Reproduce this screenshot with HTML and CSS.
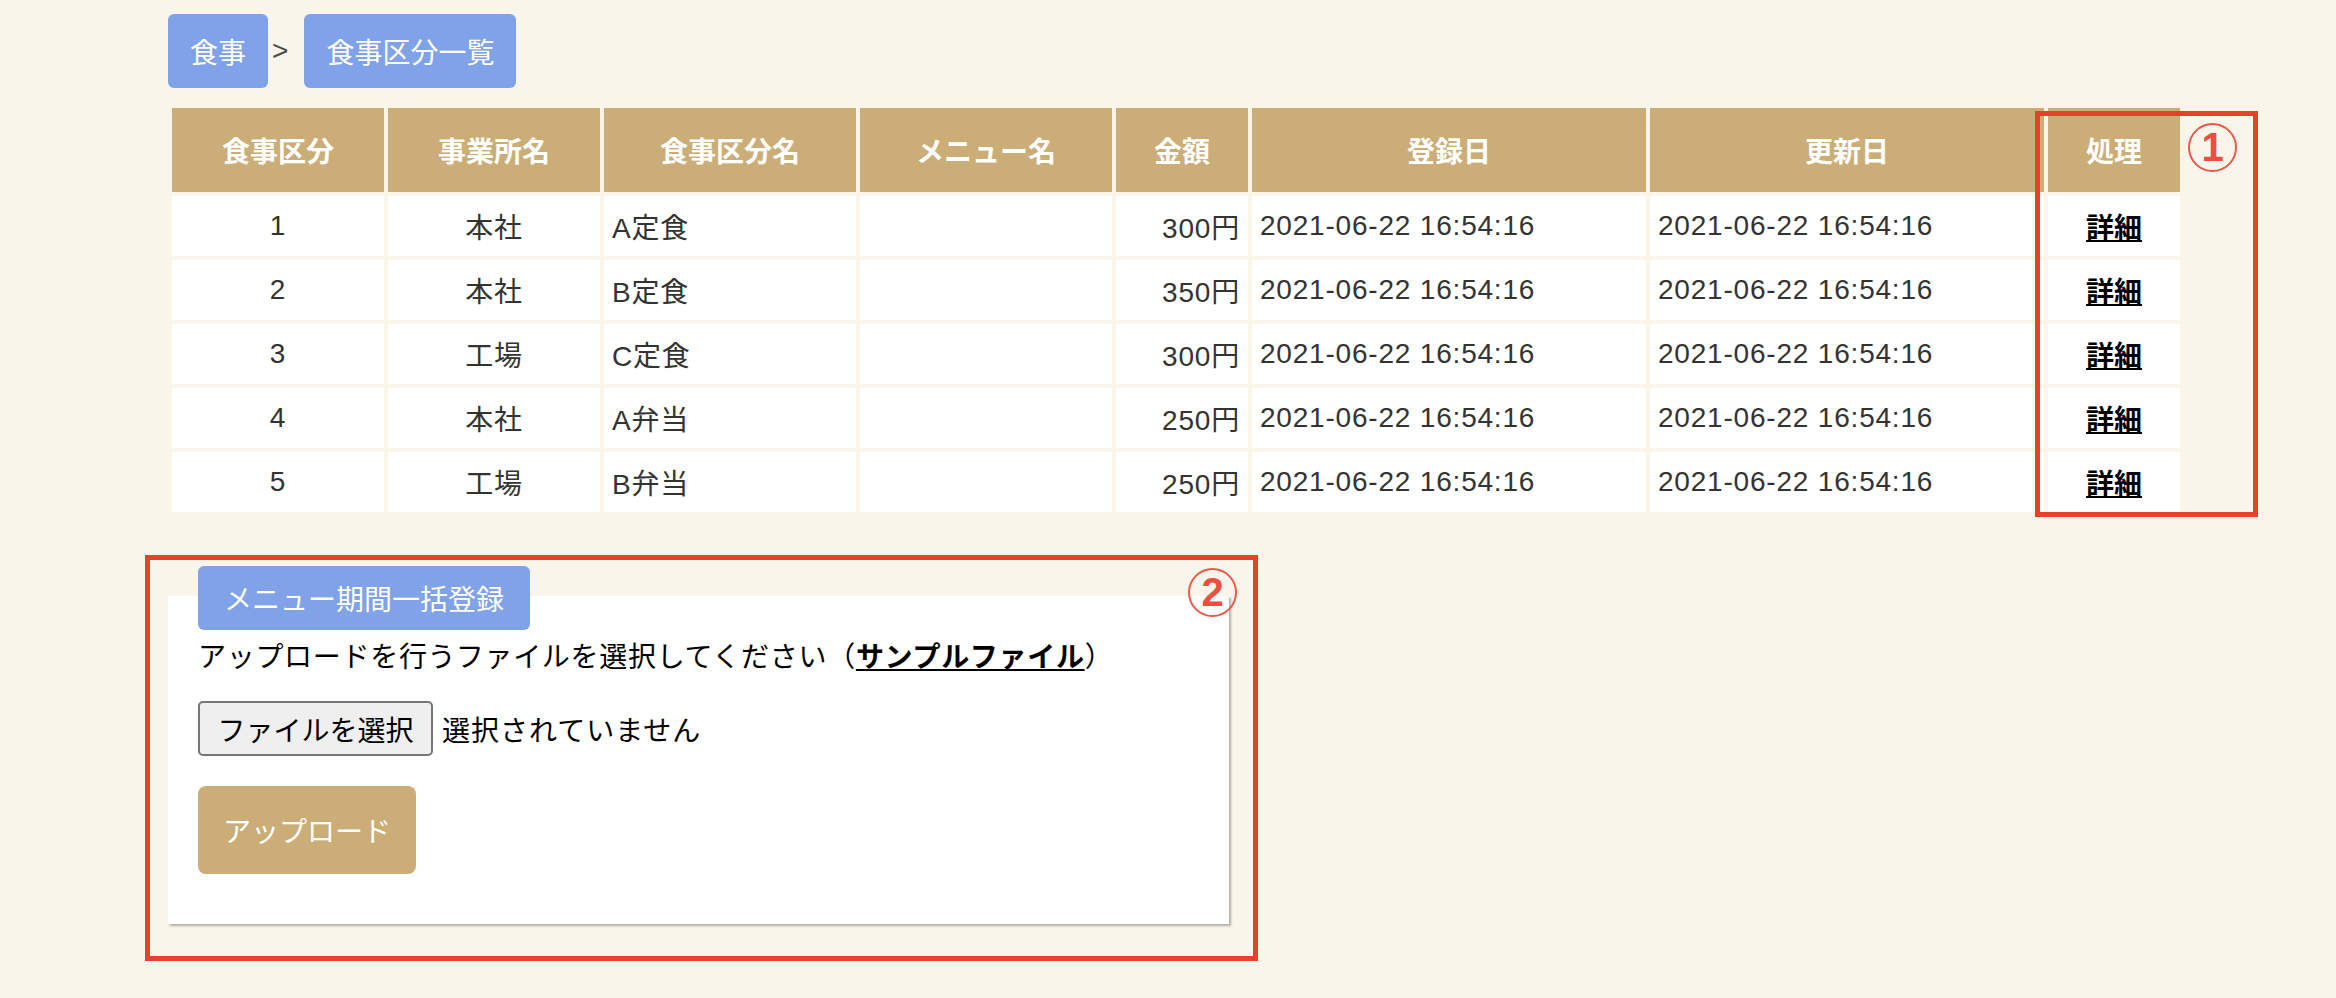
FILE: index.html
```html
<!DOCTYPE html>
<html lang="ja">
<head>
<meta charset="utf-8">
<title>食事区分一覧</title>
<link rel="stylesheet" href="styles.css">
</head>
<body>
<div class="page">
  <nav class="crumbs">
    <a class="crumb" href="#">食事</a>
    <span class="sep">&gt;</span>
    <a class="crumb" href="#">食事区分一覧</a>
  </nav>

  <table class="list">
    <colgroup>
      <col class="w-id"><col class="w-office"><col class="w-name"><col class="w-menu">
      <col class="w-price"><col class="w-date"><col class="w-date"><col class="w-act">
    </colgroup>
    <thead>
      <tr>
        <th>食事区分</th><th>事業所名</th><th>食事区分名</th><th>メニュー名</th>
        <th>金額</th><th>登録日</th><th>更新日</th><th>処理</th>
      </tr>
    </thead>
    <tbody>
      <tr><td class="c">1</td><td class="c">本社</td><td>A定食</td><td></td><td class="r">300円</td><td>2021-06-22 16:54:16</td><td>2021-06-22 16:54:16</td><td class="c"><a class="detail" href="#">詳細</a></td></tr>
      <tr><td class="c">2</td><td class="c">本社</td><td>B定食</td><td></td><td class="r">350円</td><td>2021-06-22 16:54:16</td><td>2021-06-22 16:54:16</td><td class="c"><a class="detail" href="#">詳細</a></td></tr>
      <tr><td class="c">3</td><td class="c">工場</td><td>C定食</td><td></td><td class="r">300円</td><td>2021-06-22 16:54:16</td><td>2021-06-22 16:54:16</td><td class="c"><a class="detail" href="#">詳細</a></td></tr>
      <tr><td class="c">4</td><td class="c">本社</td><td>A弁当</td><td></td><td class="r">250円</td><td>2021-06-22 16:54:16</td><td>2021-06-22 16:54:16</td><td class="c"><a class="detail" href="#">詳細</a></td></tr>
      <tr><td class="c">5</td><td class="c">工場</td><td>B弁当</td><td></td><td class="r">250円</td><td>2021-06-22 16:54:16</td><td>2021-06-22 16:54:16</td><td class="c"><a class="detail" href="#">詳細</a></td></tr>
    </tbody>
  </table>

  <section class="panel">
    <div class="legend">メニュー期間一括登録</div>
    <p class="desc">アップロードを行うファイルを選択してください（<a class="sample" href="#">サンプルファイル</a>）</p>
    <div class="file-row">
      <button class="file-btn" type="button">ファイルを選択</button>
      <span class="file-name">選択されていません</span>
    </div>
    <div class="upload-row">
      <button class="upload" type="button">アップロード</button>
    </div>
  </section>

  <div class="note note-1"></div>
  <div class="mark mark-1">1</div>
  <div class="note note-2"></div>
  <div class="mark mark-2">2</div>
</div>
</body>
</html>
```

FILE: styles.css
```css
html, body {
  margin: 0;
  padding: 0;
}
body {
  background: #f9f5eb;
  font-family: "Liberation Sans", "Noto Sans CJK JP", sans-serif;
  font-size: 28px;
  color: #333;
  width: 2336px;
  height: 998px;
  overflow: hidden;
}
.page {
  position: relative;
  padding: 14px 0 0 168px;
  height: 984px;
}

/* breadcrumb */
.crumbs {
  display: flex;
  align-items: center;
  height: 74px;
}
.crumb {
  display: flex;
  align-items: center;
  height: 74px;
  padding: 0 22px;
  background: #7fa2e8;
  color: #fff;
  border-radius: 6px;
  text-decoration: none;
}
.sep {
  color: #4a4a4a;
  margin: 0 16px 0 4px;
}

/* table */
.list {
  margin-top: 16px;
  width: 2016px;
  table-layout: fixed;
  border-collapse: separate;
  border-spacing: 4px;
}
.w-id { width: 212px; }
.w-office { width: 212px; }
.w-name { width: 252px; }
.w-menu { width: 252px; }
.w-price { width: 132px; }
.w-date { width: 394px; }
.w-act { width: 132px; }
.list th {
  height: 84px;
  padding: 0;
  background: #cbae77;
  color: #fff;
  font-weight: bold;
  text-align: center;
  vertical-align: middle;
}
.list td {
  height: 60px;
  padding: 0 8px;
  background: #fff;
  text-align: left;
  vertical-align: middle;
  letter-spacing: 0.8px;
  white-space: nowrap;
}
.list td.c { text-align: center; }
.list td.r { text-align: right; }
.detail {
  color: #000;
  font-weight: bold;
  text-decoration: underline;
  letter-spacing: 0;
}

/* upload panel */
.panel {
  display: flex;
  flex-direction: column;
  align-items: flex-start;
  width: 1031px;
  margin-top: 80px;
  padding: 0 0 50px 30px;
  background: #fff;
  box-shadow: 2px 2px 2px rgba(0, 0, 0, 0.28);
  color: #000;
}
.legend {
  margin-top: -30px;
  height: 64px;
  padding: 0 26px;
  display: flex;
  align-items: center;
  background: #7fa2e8;
  color: #fff;
  border-radius: 6px;
}
.desc {
  margin: 8px 0 0;
  line-height: 40px;
  letter-spacing: 0.7px;
}
.sample {
  color: #000;
  font-weight: bold;
  text-decoration: underline;
}
.file-row {
  display: flex;
  align-items: center;
  margin-top: 23px;
}
.file-btn {
  box-sizing: border-box;
  width: 235px;
  height: 55px;
  padding: 0;
  font: inherit;
  color: #000;
  background: #efefef;
  border: 2px solid #767676;
  border-radius: 5px;
}
.file-name {
  margin-left: 9px;
  letter-spacing: 1px;
}
.upload-row {
  margin-top: 30px;
}
.upload {
  box-sizing: border-box;
  width: 218px;
  height: 88px;
  padding: 0;
  font: inherit;
  color: #fff;
  background: #cbae77;
  border: none;
  border-radius: 8px;
}

/* annotations */
.note {
  position: absolute;
  box-sizing: border-box;
  border: 5px solid #e8412b;
}
.note-1 {
  left: 2035px;
  top: 111px;
  width: 223px;
  height: 406px;
}
.note-2 {
  left: 145px;
  top: 555px;
  width: 1113px;
  height: 406px;
}
.mark {
  position: absolute;
  box-sizing: border-box;
  width: 49px;
  height: 49px;
  border: 2px solid #ea5a4b;
  border-radius: 50%;
  color: #e9503f;
  font-family: "Liberation Sans", sans-serif;
  font-weight: bold;
  font-size: 40px;
  line-height: 45px;
  text-align: center;
}
.mark-1 {
  left: 2188px;
  top: 123px;
}
.mark-2 {
  left: 1188px;
  top: 568px;
}
```
